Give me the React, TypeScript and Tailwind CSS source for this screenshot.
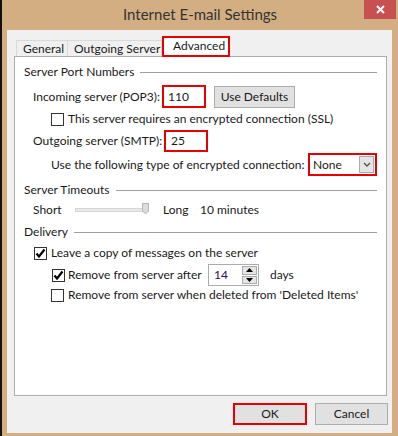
import React from "react";

function CheckBox({ checked }: { checked?: boolean }) {
  return (
    <span className="w-[13px] h-[13px] border border-[#333333] bg-white flex items-center justify-center shrink-0">
      {checked && (
        <svg width="11" height="11" viewBox="0 0 11 11">
          <path d="M1.5 5.5 L4 8.5 L9.5 1.5" fill="none" stroke="#000" strokeWidth="2.2" />
        </svg>
      )}
    </span>
  );
}

function GroupHeading({ label }: { label: string }) {
  return (
    <div className="flex items-center h-[16px] gap-[6px]">
      <span className="whitespace-nowrap">{label}</span>
      <span className="flex-1 h-px bg-[#a0a0a0]" />
    </div>
  );
}

function Button({ label, highlight }: { label: string; highlight?: boolean }) {
  return (
    <div
      className={
        highlight
          ? "h-[22px] border-2 border-[#e80000] bg-[#e1e1e1] flex items-center justify-center whitespace-nowrap"
          : "h-[22px] border border-[#adadad] bg-[#e1e1e1] flex items-center justify-center whitespace-nowrap"
      }
    >
      {label}
    </div>
  );
}

export default function App() {
  return (
    <div
      className="w-[398px] h-[436px] bg-[#d3ae83] border-l-2 border-[#111111] flex flex-col text-[12px] text-[#1a1a1a] overflow-hidden whitespace-nowrap"
      style={{ fontFamily: 'Lato, "Noto Sans", sans-serif' }}
    >
      {/* title bar */}
      <div className="relative h-[30px] shrink-0 flex items-center justify-center">
        <span className="text-[15px] text-[#333333] -mt-[2px]">Internet E-mail Settings</span>
        <div className="absolute right-[2px] top-0 w-[32px] h-[19px] bg-[#c75050] flex items-center justify-center">
          <svg width="9" height="9" viewBox="0 0 9 9">
            <path d="M1 1 L8 8 M8 1 L1 8" stroke="#fff" strokeWidth="2" />
          </svg>
        </div>
      </div>

      {/* body */}
      <div className="ml-[5px] mr-[6px] h-[403px] bg-[#f0f0f0] flex flex-col">
        {/* tabs */}
        <div className="ml-[9px] mt-[5px] h-[21px] flex items-end">
          <div className="h-[16px] w-[52px] border border-b-0 border-[#d9d9d9] bg-[#f0f0f0] pl-[6px] leading-[15px]">General</div>
          <div className="h-[16px] w-[94px] border border-b-0 border-l-0 border-[#d9d9d9] bg-[#f0f0f0] pl-[6px] leading-[15px]">Outgoing Server</div>
          <div className="h-[21px] w-[68px] border-2 border-[#e80000] bg-white pl-[9px] leading-[15px] -mb-px relative z-10">Advanced</div>
        </div>

        {/* panel */}
        <div className="ml-[7px] w-[373px] h-[340px] border border-[#adadad] bg-white pl-[9px] pr-[9px] flex flex-col">
          <div className="mt-[7px]">
            <GroupHeading label="Server Port Numbers" />
          </div>

          <div className="mt-[5px] h-[23px] flex items-center">
            <span className="ml-[9px] w-[129px]">Incoming server (POP3):</span>
            <div className="w-[44px] h-[23px] border-2 border-[#e80000] flex items-center pl-[4px]">110</div>
            <div className="ml-[8px] w-[81px]">
              <Button label="Use Defaults" />
            </div>
          </div>

          <div className="mt-[4px] h-[14px] flex items-center">
            <span className="ml-[27px]">
              <CheckBox />
            </span>
            <span className="ml-[4px]">This server requires an encrypted connection (SSL)</span>
          </div>

          <div className="mt-[3px] h-[23px] flex items-center">
            <span className="ml-[9px] w-[131px]">Outgoing server (SMTP):</span>
            <div className="w-[44px] h-[22px] border-2 border-[#e80000] flex items-center pl-[5px]">25</div>
          </div>

          <div className="mt-[1px] h-[23px] flex items-center">
            <span className="ml-[27px] w-[257px]">Use the following type of encrypted connection:</span>
            <div className="w-[69px] h-[23px] border-2 border-[#e80000] flex items-center justify-between pl-[3px] pr-[1px]">
              <span>None</span>
              <span className="w-[15px] h-[17px] bg-[#e5e5e5] border border-[#acacac] flex items-center justify-center">
                <svg width="8" height="5" viewBox="0 0 8 5">
                  <path d="M1 1 L4 4 L7 1" fill="none" stroke="#555" strokeWidth="1.4" />
                </svg>
              </span>
            </div>
          </div>

          <div className="mt-[6px]">
            <GroupHeading label="Server Timeouts" />
          </div>

          <div className="mt-[4px] h-[16px] flex items-center">
            <span className="ml-[9px] w-[42px]">Short</span>
            <div className="relative w-[74px] h-[12px] flex items-center">
              <div className="w-full h-[4px] bg-[#e7eae8] border border-[#d6d6d6]" />
              <svg className="absolute right-0 -top-[1px]" width="7" height="12" viewBox="0 0 7 12">
                <path d="M0.5 0.5 H6.5 V8 L3.5 11 L0.5 8 Z" fill="#dcdcdc" stroke="#b5b5b5" />
              </svg>
            </div>
            <span className="ml-[14px] w-[37px]">Long</span>
            <span>10 minutes</span>
          </div>

          <div className="mt-[6px]">
            <GroupHeading label="Delivery" />
          </div>

          <div className="mt-[6px] h-[14px] flex items-center">
            <span className="ml-[10px]">
              <CheckBox checked />
            </span>
            <span className="ml-[4px]">Leave a copy of messages on the server</span>
          </div>

          <div className="mt-[4px] h-[22px] flex items-center">
            <span className="ml-[28px]">
              <CheckBox checked />
            </span>
            <span className="ml-[3px] w-[140px]">Remove from server after</span>
            <div className="w-[51px] h-[22px] border border-[#acacac] flex items-center justify-between pl-[5px] pr-[1px]">
              <span className="text-[#3b0a55]">14</span>
              <span className="w-[15px] h-[18px] flex flex-col gap-[1px]">
                <span className="flex-1 bg-[#e5e5e5] border border-[#acacac] flex items-center justify-center">
                  <svg width="7" height="4" viewBox="0 0 7 4">
                    <path d="M0 4 L3.5 0 L7 4 Z" fill="#000" />
                  </svg>
                </span>
                <span className="flex-1 bg-[#e5e5e5] border border-[#acacac] flex items-center justify-center">
                  <svg width="7" height="4" viewBox="0 0 7 4">
                    <path d="M0 0 L3.5 4 L7 0 Z" fill="#000" />
                  </svg>
                </span>
              </span>
            </div>
            <span className="ml-[11px]">days</span>
          </div>

          <div className="mt-[2px] h-[14px] flex items-center">
            <span className="ml-[27px]">
              <CheckBox />
            </span>
            <span className="ml-[4px]">Remove from server when deleted from 'Deleted Items'</span>
          </div>
        </div>

        {/* footer buttons */}
        <div className="mt-[7px] flex justify-end gap-[8px] pr-[4px]">
          <div className="w-[74px]">
            <Button label="OK" highlight />
          </div>
          <div className="w-[73px]">
            <Button label="Cancel" />
          </div>
        </div>
      </div>
    </div>
  );
}
